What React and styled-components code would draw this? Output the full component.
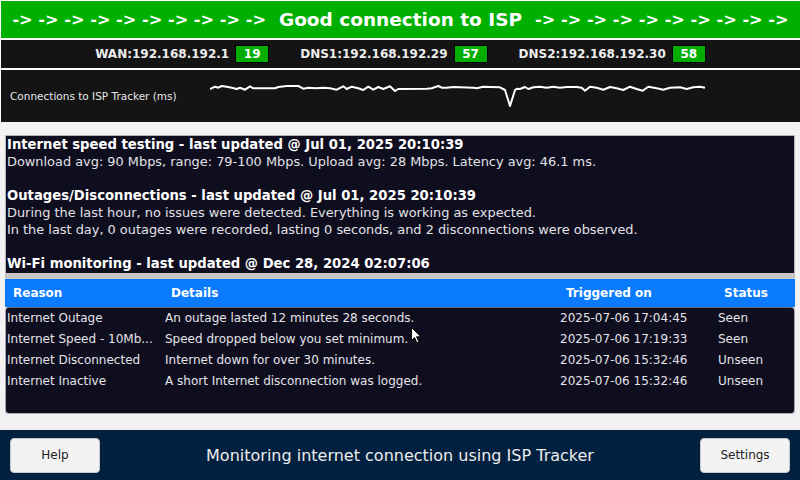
import React from 'react'
import styled, { createGlobalStyle } from 'styled-components'

const GlobalStyle = createGlobalStyle`
  html, body {
    margin: 0;
    padding: 0;
    background: #f3f1f1;
  }
  * {
    box-sizing: border-box;
  }
`

const hosts = [
  { label: 'WAN:192.168.192.1', ms: 19 },
  { label: 'DNS1:192.168.192.29', ms: 57 },
  { label: 'DNS2:192.168.192.30', ms: 58 },
]

const alerts = [
  ['Internet Outage', 'An outage lasted 12 minutes 28 seconds.', '2025-07-06 17:04:45', 'Seen'],
  ['Internet Speed - 10Mb...', 'Speed dropped below you set minimum.', '2025-07-06 17:19:33', 'Seen'],
  ['Internet Disconnected', 'Internet down for over 30 minutes.', '2025-07-06 15:32:46', 'Unseen'],
  ['Internet Inactive', 'A short Internet disconnection was logged.', '2025-07-06 15:32:46', 'Unseen'],
]

// latency trace, drawn in page coordinates (viewBox matches)
const trace = [
  [210, 89], [215, 86.7], [218.3, 87.7], [221.7, 86], [226.7, 86.7], [231.7, 87.7],
  [236.7, 89], [240, 87.7], [245, 89.7], [250, 86.3], [253.3, 88.3], [275, 88.3],
  [278.3, 87], [286.7, 86], [298.3, 86], [303.3, 88.7], [308.3, 87.7], [316.7, 88.3],
  [323.3, 87.7], [330, 88.3], [336.7, 89.7], [343.3, 86.3], [346.7, 89], [351.7, 86.7],
  [358.3, 88.3], [363.3, 90], [368.3, 86.7], [373.3, 89.7], [378.3, 87], [383.3, 89],
  [390, 86.3], [395, 91], [398.3, 89], [426.7, 88.7], [431.7, 88.3], [438.3, 86],
  [441.7, 87.7], [446.7, 87.7], [453.3, 87], [460, 87.3], [473.3, 87.7], [476.7, 88.3],
  [483.3, 86.7], [490, 87], [500, 87.3], [505, 90], [510, 106], [515, 90], [516.7, 88.7],
  [520, 89], [525, 87], [528.3, 89], [533.3, 87.3], [540, 86.7], [546.7, 87.7],
  [553.3, 86.7], [560, 87.7], [566.7, 87], [576.7, 87], [581.7, 87.7], [585, 90.7],
  [590, 86.7], [596.7, 87.7], [603.3, 89.7], [610, 87], [616.7, 88.3], [623.3, 90],
  [630, 86.7], [636.7, 89], [642.7, 90.7], [648.3, 86.7], [656.7, 88.3], [663.3, 89.7],
  [670, 87.7], [680, 87.3], [686.7, 89], [693.3, 87.3], [700, 86.7], [705, 87.7],
]

const arrows = Array(10).fill('->').join(' ')

export default function App() {
  return (
    <Screen>
      <GlobalStyle />
      <StatusBlock>
        <Banner>
          <Arrows>{arrows}</Arrows>
          <BannerTitle>Good connection to ISP</BannerTitle>
          <Arrows>{arrows}</Arrows>
        </Banner>
        <HostBar>
          {hosts.map((h) => (
            <Host key={h.label}>
              <HostLabel>{h.label}</HostLabel>
              <PingBadge>{h.ms}</PingBadge>
            </Host>
          ))}
        </HostBar>
        <GraphPanel>
          <GraphLabel>Connections to ISP Tracker (ms)</GraphLabel>
          <svg width="500" height="52" viewBox="210 70 500 52">
            <polyline
              points={trace.map((p) => p.join(',')).join(' ')}
              fill="none"
              stroke="#fff"
              strokeWidth="2"
              strokeLinejoin="round"
            />
          </svg>
        </GraphPanel>
      </StatusBlock>

      <Main>
        <InfoPanel>
          <Heading>Internet speed testing - last updated @ Jul 01, 2025 20:10:39</Heading>
          <Line>Download avg: 90 Mbps, range: 79-100 Mbps. Upload avg: 28 Mbps. Latency avg: 46.1 ms.</Line>
          <Line>&nbsp;</Line>
          <Heading>Outages/Disconnections - last updated @ Jul 01, 2025 20:10:39</Heading>
          <Line>During the last hour, no issues were detected. Everything is working as expected.</Line>
          <Line>In the last day, 0 outages were recorded, lasting 0 seconds, and 2 disconnections were observed.</Line>
          <Line>&nbsp;</Line>
          <Heading>Wi-Fi monitoring - last updated @ Dec 28, 2024 02:07:06</Heading>
        </InfoPanel>
        <Splitter />
        <TableHead>
          <HeadCell>Reason</HeadCell>
          <HeadCell>Details</HeadCell>
          <HeadCell>Triggered on</HeadCell>
          <HeadCell>Status</HeadCell>
        </TableHead>
        <TableBody>
          {alerts.map((row, i) => (
            <TableRow key={i}>
              {row.map((cell, j) => (
                <Cell key={j}>{cell}</Cell>
              ))}
            </TableRow>
          ))}
        </TableBody>
      </Main>

      <Footer>
        <FooterButton>Help</FooterButton>
        <FooterText>Monitoring internet connection using ISP Tracker</FooterText>
        <FooterButton>Settings</FooterButton>
      </Footer>

      <Pointer width="11" height="17" viewBox="0 0 11 17">
        <path d="M0.5 0.5 L0.5 13.5 L3.5 10.5 L6 16 L8 15 L5.5 9.8 L10 9.8 Z" fill="#fff" stroke="#000" strokeWidth="1" />
      </Pointer>
    </Screen>
  )
}

const cols = '158px 395px 158px 1fr'

const Screen = styled.div`
  position: relative;
  width: 800px;
  height: 480px;
  overflow: hidden;
  display: flex;
  flex-direction: column;
  background: #f3f1f1;
  font-family: 'DejaVu Sans', 'Noto Sans', sans-serif;
`

const StatusBlock = styled.div`
  display: flex;
  flex-direction: column;
  gap: 2px;
  padding: 1px 0 0 1px;
  background: #ffffff;
`

const Banner = styled.div`
  height: 37px;
  display: flex;
  align-items: center;
  justify-content: center;
  gap: 13px;
  background: #00b000;
  color: #fff;
  font-weight: bold;
  white-space: nowrap;
`

const Arrows = styled.span`
  font-size: 16.2px;
`

const BannerTitle = styled.span`
  font-size: 18.5px;
`

const HostBar = styled.div`
  height: 28px;
  display: flex;
  align-items: center;
  justify-content: center;
  gap: 31px;
  background: #141414;
`

const Host = styled.div`
  display: flex;
  align-items: center;
  gap: 6px;
`

const HostLabel = styled.span`
  color: #eeeeee;
  font-size: 12px;
  font-weight: bold;
`

const PingBadge = styled.span`
  width: 34px;
  height: 18px;
  display: flex;
  align-items: center;
  justify-content: center;
  background: #00ad00;
  border: 1px solid #000;
  color: #fff;
  font-size: 12px;
  font-weight: bold;
`

const GraphPanel = styled.div`
  height: 52px;
  display: flex;
  align-items: center;
  padding-left: 9px;
  background: #141414;
`

const GraphLabel = styled.span`
  width: 200px;
  color: #e8e8e8;
  font-size: 10.5px;
`

const Main = styled.div`
  flex: 1;
  display: flex;
  flex-direction: column;
  padding: 13px 5px 0;
`

const InfoPanel = styled.div`
  border: 1px solid #b9b4b4;
  border-bottom: none;
  background: #0f0e1f;
  padding: 0 1px 1px;
`

const Heading = styled.div`
  color: #fff;
  font-size: 13.2px;
  font-weight: bold;
  line-height: 17px;
  white-space: nowrap;
`

const Line = styled.div`
  color: #e2e2e6;
  font-size: 12.9px;
  line-height: 17px;
  white-space: nowrap;
`

const Splitter = styled.div`
  height: 6px;
  background: #c9c5c5;
`

const TableHead = styled.div`
  height: 28px;
  display: grid;
  grid-template-columns: ${cols};
  align-items: center;
  background: #0a7bff;
`

const HeadCell = styled.div`
  padding-left: 8px;
  color: #fff;
  font-size: 12px;
  font-weight: bold;
`

const TableBody = styled.div`
  height: 107px;
  border: 1px solid #a8a8ae;
  border-top-color: #6a6a72;
  border-radius: 4px;
  background: #0f0e1f;
`

const TableRow = styled.div`
  height: 21px;
  display: grid;
  grid-template-columns: ${cols};
  align-items: center;
  margin-top: -1px;
  & + & {
    margin-top: 0;
  }
`

const Cell = styled.div`
  padding: 0 2px 0 1px;
  color: #e4e4e8;
  font-size: 12px;
  white-space: nowrap;
`

const Footer = styled.div`
  height: 50px;
  display: flex;
  align-items: center;
  justify-content: space-between;
  padding: 0 10px;
  background: #02203f;
`

const FooterButton = styled.button`
  width: 90px;
  height: 35px;
  border: 1px solid #c8c8c8;
  border-radius: 4px;
  background: #f2f2f2;
  color: #222;
  font-family: 'DejaVu Sans', sans-serif;
  font-size: 12px;
`

const FooterText = styled.span`
  color: #ececec;
  font-size: 16px;
`

const Pointer = styled.svg`
  position: absolute;
  left: 411px;
  top: 327px;
`
